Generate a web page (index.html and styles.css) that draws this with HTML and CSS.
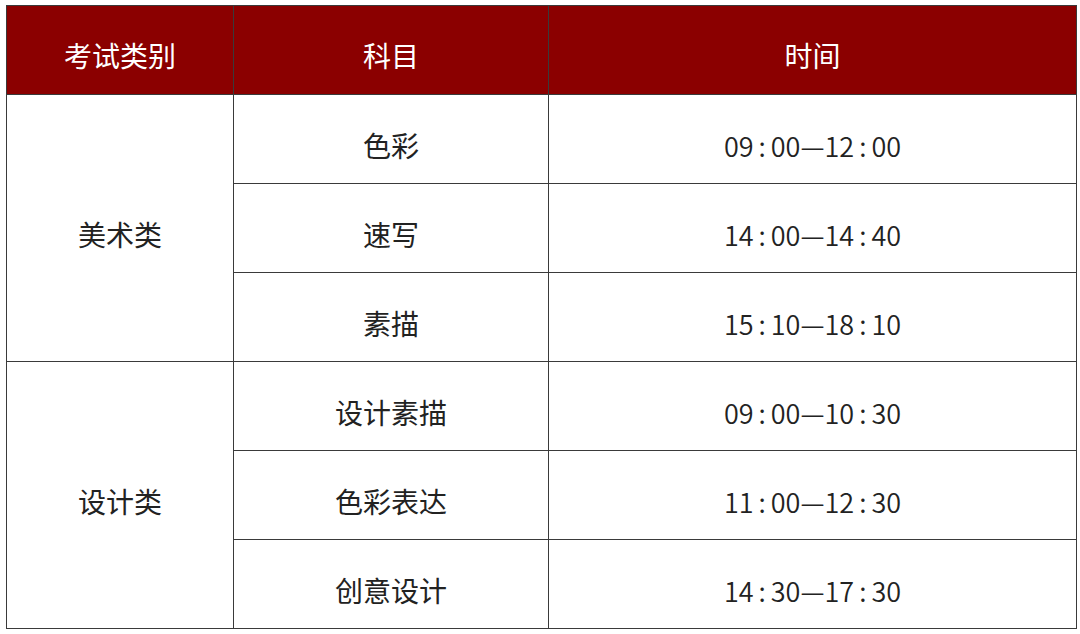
FILE: index.html
```html
<!DOCTYPE html>
<html lang="zh-CN">
<head>
<meta charset="utf-8">
<title>考试安排</title>
<link rel="stylesheet" href="styles.css">
</head>
<body>
<table class="schedule">
  <colgroup>
    <col class="c1">
    <col class="c2">
    <col class="c3">
  </colgroup>
  <thead>
    <tr><th>考试类别</th><th>科目</th><th>时间</th></tr>
  </thead>
  <tbody>
    <tr><td rowspan="3">美术类</td><td>色彩</td><td class="time">09<span class="colon">:</span>00—12<span class="colon">:</span>00</td></tr>
    <tr><td>速写</td><td class="time">14<span class="colon">:</span>00—14<span class="colon">:</span>40</td></tr>
    <tr><td>素描</td><td class="time">15<span class="colon">:</span>10—18<span class="colon">:</span>10</td></tr>
    <tr><td rowspan="3">设计类</td><td>设计素描</td><td class="time">09<span class="colon">:</span>00—10<span class="colon">:</span>30</td></tr>
    <tr><td>色彩表达</td><td class="time">11<span class="colon">:</span>00—12<span class="colon">:</span>30</td></tr>
    <tr><td>创意设计</td><td class="time">14<span class="colon">:</span>30—17<span class="colon">:</span>30</td></tr>
  </tbody>
</table>
</body>
</html>
```
FILE: styles.css
```css
html, body {
  margin: 0;
  padding: 0;
  background: #ffffff;
}
body {
  padding: 5px 0 0 6px;
  font-family: "Noto Sans CJK SC", "Noto Sans", sans-serif;
}
.schedule {
  border-collapse: collapse;
  width: 1070px;
  table-layout: fixed;
}
.c1 { width: 227px; }
.c2 { width: 315px; }
.c3 { width: 528px; }
.schedule th,
.schedule td {
  border: 1px solid #3a3a3a;
  height: 76px;
  padding: 12px 0 0;
  text-align: center;
  vertical-align: middle;
  font-size: 28px;
  line-height: 1;
}
.schedule th {
  background: #8b0000;
  color: #ffffff;
  font-weight: 400;
  height: 78px;
  padding-top: 10px;
}
.schedule td {
  color: #222222;
}
.schedule .time {
  font-size: 27px;
  font-weight: 350;
  color: #222222;
}
.colon {
  display: inline-block;
  margin: 0 5px;
}
```
